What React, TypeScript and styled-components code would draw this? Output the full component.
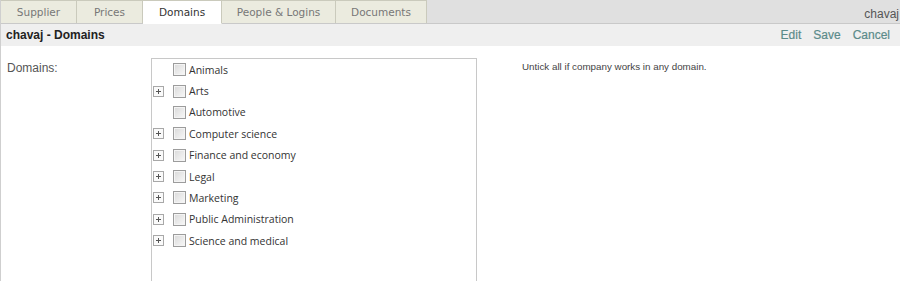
import React from "react";
import styled, { createGlobalStyle } from "styled-components";

const Global = createGlobalStyle`
  html, body { margin: 0; padding: 0; background: #fff; }
  body { font-family: "Liberation Sans", Arial, sans-serif; }
`;

const Page = styled.div`
  width: 900px;
  height: 281px;
  overflow: hidden;
  background: #fff;
  border-left: 1px solid #cfcfcf;
  box-sizing: border-box;
`;

const TopBar = styled.div`
  display: flex;
  align-items: stretch;
  height: 23px;
  background: #e0e0e0;
  border-bottom: 1px solid #c9c9c9;
  margin-left: -1px;
`;

const Tab = styled.div<{ $w: number; $active?: boolean }>`
  width: ${(p) => p.$w}px;
  box-sizing: border-box;
  display: flex;
  align-items: center;
  justify-content: center;
  font-family: "DejaVu Sans", Verdana, sans-serif;
  font-size: 10.5px;
  color: ${(p) => (p.$active ? "#333" : "#777")};
  background: ${(p) => (p.$active ? "#fff" : "#ebebdf")};
  border: 1px solid #cacabc;
  border-left: none;
  border-bottom: ${(p) => (p.$active ? "1px solid #fff" : "none")};
  margin-bottom: ${(p) => (p.$active ? "-1px" : "0")};
  &:first-child { border-left: 1px solid #cacabc; }
`;

const User = styled.div`
  margin-left: auto;
  align-self: flex-end;
  padding: 0 1px 2px 0;
  font-size: 12px;
  color: #555;
`;

const HeaderBar = styled.div`
  display: flex;
  align-items: center;
  justify-content: space-between;
  height: 22px;
  padding: 0 10px 0 5px;
  background: #efefef;
`;

const Title = styled.div`
  font-weight: bold;
  font-size: 12px;
  color: #222;
`;

const Actions = styled.div`
  display: flex;
  gap: 12px;
`;

const ActionLink = styled.a`
  font-size: 12px;
  color: #5b8b8a;
  text-decoration: none;
  -webkit-text-stroke: 0.2px #5b8b8a;
`;

const Content = styled.div`
  display: flex;
  align-items: flex-start;
  padding-top: 12px;
`;

const Label = styled.div`
  width: 150px;
  box-sizing: border-box;
  padding: 3px 0 0 6px;
  font-size: 12px;
  color: #555;
`;

const TreeBox = styled.div`
  width: 326px;
  height: 260px;
  box-sizing: border-box;
  border: 1px solid #c8c8c8;
  padding: 0 0 0 1px;
`;

const Row = styled.div`
  display: flex;
  align-items: center;
  height: 21.375px;
`;

const ExpanderSlot = styled.div`
  width: 20px;
  display: flex;
  align-items: center;
`;

const Check = styled.span`
  width: 13px;
  height: 13px;
  box-sizing: border-box;
  border: 1px solid #9c9c9c;
  background: linear-gradient(135deg, #d9d9d9 0%, #ececec 60%, #f8f8f8 100%);
  box-shadow: inset 0 0 0 1px #f4f4f4;
  margin-right: 3px;
`;

const ItemText = styled.span`
  font-family: "Open Sans", "Segoe UI", sans-serif;
  font-size: 10.5px;
  color: #333;
`;

const Help = styled.div`
  margin-left: 45px;
  padding-top: 3px;
  font-size: 9.8px;
  color: #444;
`;

const Plus = () => (
  <svg width="11" height="11" viewBox="0 0 11 11">
    <rect x="0.5" y="0.5" width="10" height="10" fill="#fafafa" stroke="#a8a8a8" />
    <path d="M3 5.5h5M5.5 3v5" stroke="#555" strokeWidth="1" />
  </svg>
);

const items: { name: string; children: boolean }[] = [
  { name: "Animals", children: false },
  { name: "Arts", children: true },
  { name: "Automotive", children: false },
  { name: "Computer science", children: true },
  { name: "Finance and economy", children: true },
  { name: "Legal", children: true },
  { name: "Marketing", children: true },
  { name: "Public Administration", children: true },
  { name: "Science and medical", children: true },
];

const tabs = [
  { label: "Supplier", w: 77 },
  { label: "Prices", w: 66 },
  { label: "Domains", w: 79, active: true },
  { label: "People & Logins", w: 114 },
  { label: "Documents", w: 91 },
];

export default function App() {
  return (
    <>
      <Global />
      <Page>
        <TopBar>
          {tabs.map((t) => (
            <Tab key={t.label} $w={t.w} $active={t.active}>
              {t.label}
            </Tab>
          ))}
          <User>chavaj</User>
        </TopBar>
        <HeaderBar>
          <Title>chavaj - Domains</Title>
          <Actions>
            <ActionLink href="#">Edit</ActionLink>
            <ActionLink href="#">Save</ActionLink>
            <ActionLink href="#">Cancel</ActionLink>
          </Actions>
        </HeaderBar>
        <Content>
          <Label>Domains:</Label>
          <TreeBox>
            {items.map((it) => (
              <Row key={it.name}>
                <ExpanderSlot>{it.children && <Plus />}</ExpanderSlot>
                <Check />
                <ItemText>{it.name}</ItemText>
              </Row>
            ))}
          </TreeBox>
          <Help>Untick all if company works in any domain.</Help>
        </Content>
      </Page>
    </>
  );
}
